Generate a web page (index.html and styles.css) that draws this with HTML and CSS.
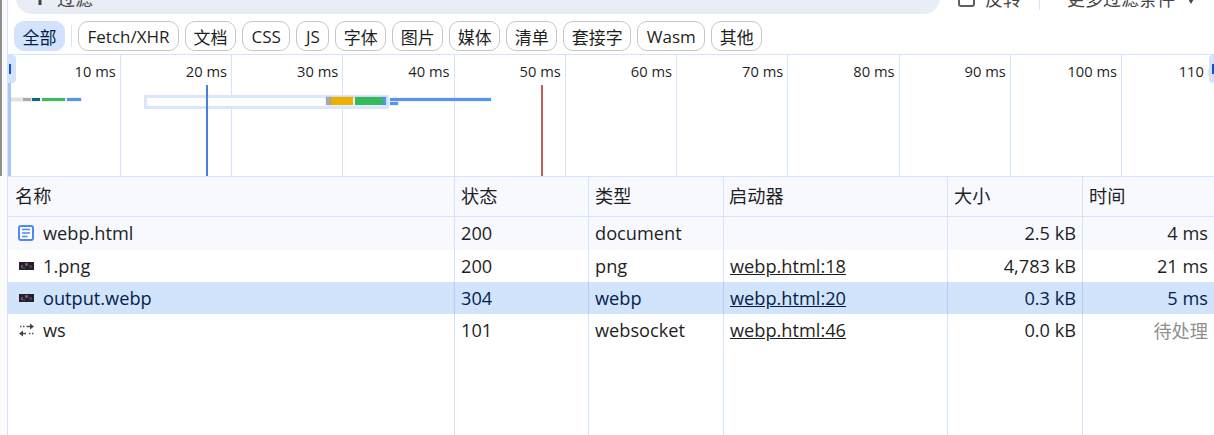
FILE: index.html
```html
<!DOCTYPE html>
<html lang="zh">
<head>
<meta charset="utf-8">
<title>网络</title>
<link rel="stylesheet" href="styles.css">
</head>
<body>
<div class="gutter"><span class="gutter-bar"></span></div>
<div class="panel">
  <div class="filterbar">
    <div class="search"><svg class="funnel" width="12" height="14" viewBox="0 0 12 14"><path d="M4.5 0h3v14h-3z" fill="#444"/></svg><span class="search-text">过滤</span></div>
    <label class="invert"><span class="checkbox"></span><span>反转</span></label>
    <span class="vsep"></span>
    <span class="more">更多过滤条件<span class="caret"></span></span>
  </div>
  <div class="chips">
    <span class="chip active">全部</span>
    <span class="chip-sep"></span>
    <span class="chip latin">Fetch/XHR</span>
    <span class="chip">文档</span>
    <span class="chip latin">CSS</span>
    <span class="chip latin">JS</span>
    <span class="chip">字体</span>
    <span class="chip">图片</span>
    <span class="chip">媒体</span>
    <span class="chip">清单</span>
    <span class="chip">套接字</span>
    <span class="chip latin">Wasm</span>
    <span class="chip">其他</span>
  </div>
  <div class="overview">
    <div class="ticks">
      <div class="tick">10 ms</div>
      <div class="tick">20 ms</div>
      <div class="tick">30 ms</div>
      <div class="tick">40 ms</div>
      <div class="tick">50 ms</div>
      <div class="tick">60 ms</div>
      <div class="tick">70 ms</div>
      <div class="tick">80 ms</div>
      <div class="tick">90 ms</div>
      <div class="tick">100 ms</div>
      <div class="tick">110 ms</div>
    </div>
    <span class="handle left"></span>
    <span class="handle right"></span>
    <span class="bar b1"></span><span class="bar b2"></span><span class="bar b3"></span><span class="bar b4"></span><span class="bar b5"></span>
    <span class="selbox"></span>
    <span class="bar b6"></span><span class="bar b7"></span><span class="bar b8"></span><span class="bar b9"></span><span class="bar b10"></span><span class="bar b11"></span>
    <span class="marker blue"></span>
    <span class="marker red"></span>
  </div>
  <div class="table">
    <div class="row head">
      <div class="cell">名称</div><div class="cell">状态</div><div class="cell">类型</div><div class="cell init">启动器</div><div class="cell">大小</div><div class="cell">时间</div>
    </div>
    <div class="row r1 tint">
      <div class="cell name"><svg class="ico" width="18" height="18" viewBox="0 0 18 18"><rect x="2" y="2" width="14" height="14" rx="2" fill="#fff" stroke="#4a8af4" stroke-width="2"/><path d="M5 5.5h8M5 9h8M5 12.5h5.5" stroke="#4a8af4" stroke-width="1.7"/></svg>webp.html</div>
      <div class="cell">200</div><div class="cell">document</div><div class="cell"></div><div class="cell num">2.5 kB</div><div class="cell num">4 ms</div>
    </div>
    <div class="row r2">
      <div class="cell name"><svg class="ico" width="18" height="18" viewBox="0 0 18 18"><rect x="2" y="5" width="15" height="8" fill="#23222c"/><path d="M4 8h2v3H4zM8 6h3v3H8z" fill="#6a4f5c"/><path d="M12 8h3v3h-3zM6 10h2v2H6z" fill="#4b3a48"/><path d="M9 7h1v1H9z" fill="#a9707a"/></svg>1.png</div>
      <div class="cell">200</div><div class="cell">png</div><div class="cell"><a class="link">webp.html:18</a></div><div class="cell num">4,783 kB</div><div class="cell num">21 ms</div>
    </div>
    <div class="row r2 selected">
      <div class="cell name"><svg class="ico" width="18" height="18" viewBox="0 0 18 18"><rect x="2" y="5" width="15" height="8" fill="#23222c"/><path d="M4 8h2v3H4zM8 6h3v3H8z" fill="#6a4f5c"/><path d="M12 8h3v3h-3zM6 10h2v2H6z" fill="#4b3a48"/><path d="M9 7h1v1H9z" fill="#a9707a"/></svg>output.webp</div>
      <div class="cell">304</div><div class="cell">webp</div><div class="cell"><a class="link">webp.html:20</a></div><div class="cell num">0.3 kB</div><div class="cell num">5 ms</div>
    </div>
    <div class="row r2">
      <div class="cell name"><svg class="ico" width="18" height="18" viewBox="0 0 18 18"><path d="M3 5.5h1.5M6 5.5h1.5M9.5 5.5h4" stroke="#555" stroke-width="1.4" fill="none"/><path d="M13 2.5l4 3-4 3z" fill="#444"/><path d="M16.500 12.500h-1.500M13.500 12.500h-1.500M9 12.500H5" stroke="#555" stroke-width="1.400" fill="none"/><path d="M6 9.500l-4 3 4 3z" fill="#444"/></svg>ws</div>
      <div class="cell">101</div><div class="cell">websocket</div><div class="cell"><a class="link">webp.html:46</a></div><div class="cell num">0.0 kB</div><div class="cell num pending">待处理</div>
    </div>
    <div class="row filler">
      <div class="cell"></div><div class="cell"></div><div class="cell"></div><div class="cell"></div><div class="cell"></div><div class="cell"></div>
    </div>
  </div>
</div>
</body>
</html>
```
FILE: styles.css
```css
* { box-sizing: border-box; }
html, body { margin: 0; height: 100%; overflow: hidden; background: #fff; }
body {
  font-family: "Open Sans", "Noto Sans CJK SC", sans-serif;
  font-size: 18.2px;
  color: #1f1f1f;
  display: flex;
}
.gutter { width: 7px; height: 435px; flex: none; background: #fbfbfb; }
.gutter-bar { display: block; width: 2px; height: 176px; background: #8f8f8f; }
.panel {
  height: 435px;
  border-left: 1px solid #d3e3fd;
  display: flex;
  flex-direction: column;
  flex: 1;
  min-width: 0;
  overflow: hidden;
}
.filterbar {
  height: 14px;
  display: flex;
  align-items: flex-end;
  overflow: hidden;
  padding-left: 8px;
  flex: none;
}
.search {
  width: 924px;
  height: 32px;
  flex: none;
  background: #e9eef6;
  border-radius: 0 0 16px 16px;
  display: flex;
  align-items: center;
  padding-left: 18px;
  gap: 11px;
  color: #444;
  font-size: 18px;
}
.invert { display: flex; align-items: center; gap: 10px; margin-left: 18px; height: 32px; flex: none; color: #444; font-size: 18px; }
.checkbox { width: 17px; height: 17px; border: 2px solid #5f5f5f; border-radius: 3px; }
.vsep { width: 1px; height: 24px; background: #d3e3fd; margin: 0 27px 4px 18px; flex: none; }
.more { display: flex; align-items: center; height: 32px; gap: 12px; flex: none; color: #444; font-size: 18px; white-space: nowrap; }
.caret { width: 0; height: 0; margin-top: 4px; border-left: 4.500px solid transparent; border-right: 4.500px solid transparent; border-top: 7px solid #444; }
.chips {
  height: 40px;
  padding: 7px 0 2px 6px;
  display: flex;
  align-items: flex-start;
  gap: 6px;
  font-size: 17px;
  flex: none;
}
.chip {
  height: 30px;
  padding: 0 7.500px;
  border: 1px solid #c7c7c7;
  border-radius: 10px;
  display: flex;
  align-items: center;
  white-space: nowrap;
}
.chip.latin { padding: 0 8.500px; }
.chip.active { background: #d3e3fd; border-color: #d3e3fd; color: #041e49; }
.chip-sep { width: 1px; height: 22px; margin: 4px 0 0 0; background: #d3e3fd; }
.overview {
  position: relative;
  height: 122px;
  border-top: 1px solid #d3e3fd;
  flex: none;
}
.ticks { display: flex; height: 100%; padding-left: 1.500px; }
.tick {
  width: 111.250px;
  flex: none;
  border-right: 1px solid #d3e3fd;
  text-align: right;
  padding: 6px 4px 0 0;
  font-size: 14.700px;
  line-height: 20px;
  color: #1f1f1f;
  white-space: nowrap;
}
.handle { position: absolute; top: 0; width: 8px; height: 28px; background: #d3e3fd; }
.handle.left { left: 0; border-radius: 0 4px 4px 0; }
.handle.right { right: -3px; border-radius: 4px 0 0 4px; }
.handle::after { content: ""; position: absolute; top: 9px; left: 1px; width: 2px; height: 10px; background: #0b57d0; }
.handle.right::after { left: 3px; }
.overview::before { content: ""; position: absolute; left: 0; top: 28px; bottom: 0; width: 3px; background: #a8c7fa; }
.bar { position: absolute; height: 3px; top: 43px; box-shadow: 0 0 0 1px rgba(120, 140, 170, 0.12); }
.b1 { left: 3px; width: 11px; background: #dfe1e5; }
.b2 { left: 15px; width: 8px; background: #aaa; }
.b3 { left: 24px; width: 8px; background: #0a6a85; }
.b4 { left: 34px; width: 23px; background: #3cba5f; }
.b5 { left: 59px; width: 14px; background: #5394f7; }
.selbox { position: absolute; left: 136px; top: 40px; width: 245px; height: 14px; border: 3px solid #d9e6fc; background: #fff; }
.b6 { left: 318px; top: 42px; height: 8px; width: 5px; background: #a8a8a8; }
.b7 { left: 323px; top: 42px; height: 8px; width: 22px; background: #ebb000; }
.b8 { left: 347px; top: 42px; height: 8px; width: 29px; background: #34bb5e; }
.b9 { left: 375px; top: 42px; height: 8px; width: 3px; background: #5394f7; }
.b10 { left: 382px; top: 43px; height: 3px; width: 101px; background: #5394f7; }
.b11 { left: 382px; top: 47px; height: 3px; width: 8px; background: #5394f7; }
.marker { position: absolute; top: 30px; bottom: 0; width: 2px; }
.marker.blue { left: 198px; background: #4a7fe0; }
.marker.red { left: 533px; background: #c0605c; }
.table { flex: 1; display: flex; flex-direction: column; min-height: 0; }
.row { display: grid; grid-template-columns: 447px 134px 135px 224px 135px 1fr; flex: none; }
.cell { border-right: 1px solid #d3e3fd; padding: 0 6px; display: flex; align-items: center; white-space: nowrap; overflow: hidden; }
.cell:first-child { padding-left: 7px; }
.cell:last-child { border-right: 0; }
.head { height: 41px; background: #f8f9ff; border-bottom: 1px solid #d3e3fd; border-top: 1px solid #d3e3fd; }
.head .cell { padding-bottom: 3px; }
.head .init { padding-left: 5px; }
.r1 { height: 33px; }
.r1 .cell { padding-bottom: 2px; }
.r2 { height: 32px; }
.tint { background: #f8f9ff; }
.selected { background: #d2e3fc; color: #041e49; }
.selected .cell { border-right-color: #b5cdf5; }
.selected .cell:last-child { border-right: 0; }
.cell.name { gap: 8px; padding-left: 9px; }
.ico { flex: none; }
.num { justify-content: flex-end; }
.link { text-decoration: underline; }
.pending { color: #8f8f8f; }
.row.filler { flex: 1; }
```
